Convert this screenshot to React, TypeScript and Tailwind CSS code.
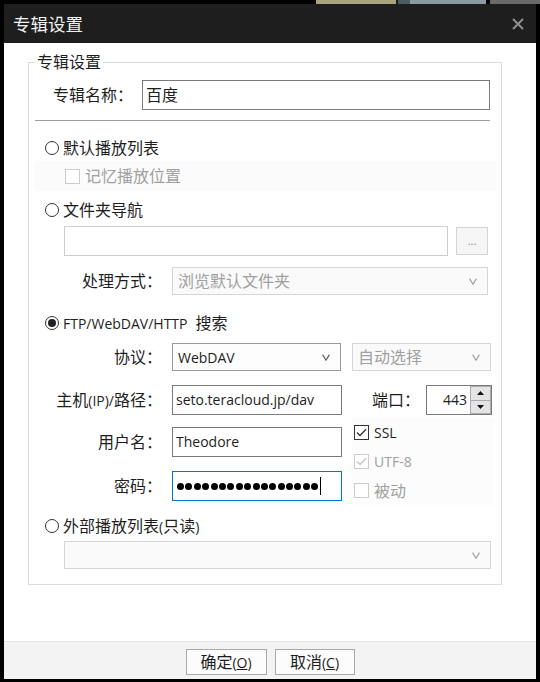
import React from "react";

// Latin runs are set a little smaller than the CJK text around them
function L({ children }: { children: React.ReactNode }) {
  return <span className="text-[14px]">{children}</span>;
}

function Radio({ checked = false }: { checked?: boolean }) {
  return (
    <span className="w-[14px] h-[14px] rounded-full border border-[#333333] bg-white flex items-center justify-center shrink-0">
      {checked && <span className="w-[8px] h-[8px] rounded-full bg-[#222222]" />}
    </span>
  );
}

function Check({ checked = false, disabled = false }: { checked?: boolean; disabled?: boolean }) {
  const line = disabled ? "#c4c4c4" : "#333333";
  return (
    <span
      className={
        "w-[15px] h-[15px] border bg-white flex items-center justify-center shrink-0 " +
        (disabled ? "border-[#cccccc]" : "border-[#333333]")
      }
    >
      {checked && (
        <svg width="11" height="9" viewBox="0 0 11 9">
          <path d="M1 4.5L4 7.5L10 1.2" fill="none" stroke={line} strokeWidth="1.3" />
        </svg>
      )}
    </span>
  );
}

function Chevron({ disabled = false }: { disabled?: boolean }) {
  return (
    <svg width="8" height="7" viewBox="0 0 8 7" className="shrink-0">
      <path d="M0.6 0.6L4 6.2L7.4 0.6" fill="none" stroke={disabled ? "#9a9a9a" : "#555555"} strokeWidth="1.1" />
    </svg>
  );
}

function Select({
  children,
  disabled = false,
  className = "",
}: {
  children?: React.ReactNode;
  disabled?: boolean;
  className?: string;
}) {
  return (
    <div
      className={
        "h-[28px] border flex items-center justify-between pl-[5px] pr-[10px] " +
        (disabled
          ? "border-[#d6d6d6] bg-[#fafafa] text-[#a0a0a0] "
          : "border-[#9a9a9a] bg-[#fdfdfd] text-[#1e1e1e] ") +
        className
      }
    >
      <span>{children}</span>
      <Chevron disabled={disabled} />
    </div>
  );
}

export default function App() {
  return (
    <div className="w-[540px] h-[682px] bg-black flex flex-col font-['Open_Sans','Noto_Sans_CJK_SC',sans-serif] text-[16px] leading-[20px] text-[#1e1e1e] overflow-hidden">
      {/* desktop strip above the window */}
      <div className="h-[4px] flex shrink-0">
        <div className="w-[316px] bg-black" />
        <div className="w-[80px] bg-[#a7a37a]" />
        <div className="w-[2px] bg-[#1a1a1a]" />
        <div className="w-[12px] bg-[#4d5a60]" />
        <div className="w-[76px] bg-[#8c99a0]" />
        <div className="w-[4px] bg-black" />
        <div className="flex-1 bg-[#6a6a6a]" />
      </div>

      <div className="flex-1 flex flex-col mx-[4px] mb-[3px]">
        {/* title bar */}
        <div className="h-[39px] shrink-0 bg-[#1e1e1e] flex items-center justify-between pl-[9px] pr-[12px]">
          <span className="text-[17.5px] text-[#f2f2f2]">专辑设置</span>
          <svg width="12" height="12" viewBox="0 0 12 12">
            <path d="M1 1L11 11M11 1L1 11" stroke="#8f8f8f" strokeWidth="2" />
          </svg>
        </div>

        {/* dialog body */}
        <div className="flex-1 bg-white pl-[24px] pt-[9px]">
          <fieldset className="w-[474px] border border-[#dcdcdc] pb-[15px]">
            <legend className="ml-[6px] px-[2px] leading-[20px]">专辑设置</legend>

            <div className="flex items-center mt-[8px]">
              <span className="ml-[24px] w-[80px]">专辑名称：</span>
              <div className="ml-[9px] w-[348px] h-[30px] border border-[#7a7a7a] flex items-center pl-[3px]">
                百度
              </div>
            </div>

            <div className="ml-[6px] mt-[10px] w-[455px] h-px bg-[#a0a0a0]" />

            <div className="flex items-center gap-[4px] h-[24px] mt-[15px] ml-[16px]">
              <Radio />
              <span>默认播放列表</span>
            </div>

            <div className="flex items-center gap-[5px] h-[30px] mt-[1px] ml-[6px] w-[461px] bg-[#fbfbfb] pl-[30px]">
              <Check disabled />
              <span className="text-[#a0a0a0]">记忆播放位置</span>
            </div>

            <div className="flex items-center gap-[4px] h-[24px] mt-[7px] ml-[16px]">
              <Radio />
              <span>文件夹导航</span>
            </div>

            <div className="flex items-center mt-[4px] ml-[35px]">
              <div className="w-[384px] h-[30px] border border-[#cccccc] bg-white" />
              <div className="ml-[8px] w-[32px] h-[28px] border border-[#d4d4d4] bg-[#f6f6f6] flex items-center justify-center text-[11px] text-[#8a8a8a]">
                ...
              </div>
            </div>

            <div className="flex items-center mt-[11px]">
              <span className="w-[133px] text-right">处理方式：</span>
              <Select disabled className="ml-[10px] w-[316px]">浏览默认文件夹</Select>
            </div>

            <div className="flex items-center gap-[4px] h-[24px] mt-[16px] ml-[16px]">
              <Radio checked />
              <span>
                <L>FTP/WebDAV/HTTP</L>
                <span className="ml-[8px]">搜索</span>
              </span>
            </div>

            <div className="flex items-center mt-[8px]">
              <span className="w-[133px] text-right">协议：</span>
              <Select className="ml-[10px] w-[169px]">
                <L>WebDAV</L>
              </Select>
              <Select disabled className="ml-[11px] w-[139px]">自动选择</Select>
            </div>

            <div className="flex items-center mt-[14px]">
              <span className="w-[133px] text-right">
                主机<L>(IP)/</L>路径：
              </span>
              <div className="ml-[10px] w-[170px] h-[30px] border border-[#7a7a7a] flex items-center pl-[3px]">
                <L>seto.teracloud.jp/dav</L>
              </div>
              <span className="ml-[30px] w-[48px]">端口：</span>
              <div className="ml-[6px] w-[66px] h-[30px] border border-[#7a7a7a] flex">
                <div className="flex-1 flex items-center justify-end pr-[3px]">
                  <L>443</L>
                </div>
                <div className="w-[21px] flex flex-col">
                  <div className="flex-1 border border-[#acacac] bg-[#e4e4e4] flex items-center justify-center">
                    <svg width="7" height="4" viewBox="0 0 7 4">
                      <path d="M0 4L3.5 0L7 4Z" fill="#111111" />
                    </svg>
                  </div>
                  <div className="flex-1 border border-t-0 border-[#acacac] bg-[#e4e4e4] flex items-center justify-center">
                    <svg width="7" height="4" viewBox="0 0 7 4">
                      <path d="M0 0L3.5 4L7 0Z" fill="#111111" />
                    </svg>
                  </div>
                </div>
              </div>
            </div>

            <div className="flex mt-[3px]">
              <div className="flex flex-col pt-[9px]">
                <div className="flex items-center">
                  <span className="w-[133px] text-right">用户名：</span>
                  <div className="ml-[10px] w-[170px] h-[30px] border border-[#7a7a7a] flex items-center pl-[3px]">
                    <L>Theodore</L>
                  </div>
                </div>
                <div className="flex items-center mt-[14px]">
                  <span className="w-[133px] text-right">密码：</span>
                  <div className="ml-[10px] w-[170px] h-[30px] border border-[#0078d7] flex items-center pl-[4px]">
                    <div className="flex gap-[1.4px]">
                      {Array.from({ length: 17 }).map((_, i) => (
                        <span key={i} className="w-[7px] h-[7px] rounded-full bg-black" />
                      ))}
                    </div>
                    <span className="ml-[2px] w-px h-[18px] bg-black" />
                  </div>
                </div>
              </div>
              <div className="ml-[10px] w-[143px] flex flex-col bg-[#fcfcfc]">
                <div className="h-[29px] flex items-center gap-[5px] pl-[2px]">
                  <Check checked />
                  <L>SSL</L>
                </div>
                <div className="h-[29px] flex items-center gap-[5px] pl-[2px]">
                  <Check checked disabled />
                  <span className="text-[#a0a0a0]">
                    <L>UTF-8</L>
                  </span>
                </div>
                <div className="h-[29px] flex items-center gap-[5px] pl-[2px]">
                  <Check disabled />
                  <span className="text-[#a0a0a0]">被动</span>
                </div>
              </div>
            </div>

            <div className="flex items-center gap-[4px] h-[24px] mt-[9px] ml-[16px]">
              <Radio />
              <span>
                外部播放列表<L>(</L>只读<L>)</L>
              </span>
            </div>

            <Select disabled className="mt-[3px] ml-[35px] w-[427px]" />
          </fieldset>
        </div>

        {/* button bar */}
        <div className="h-[38px] shrink-0 bg-[#f3f3f3] border-t border-[#e3e3e3] flex justify-center gap-[8px] pt-[7px]">
          <button className="w-[81px] h-[26px] border border-[#a9a9a9] bg-[#fcfcfc] leading-[20px]">
            确定<L>(<span className="underline">O</span>)</L>
          </button>
          <button className="w-[80px] h-[26px] border border-[#a9a9a9] bg-[#fcfcfc] leading-[20px]">
            取消<L>(<span className="underline">C</span>)</L>
          </button>
        </div>
      </div>
    </div>
  );
}
